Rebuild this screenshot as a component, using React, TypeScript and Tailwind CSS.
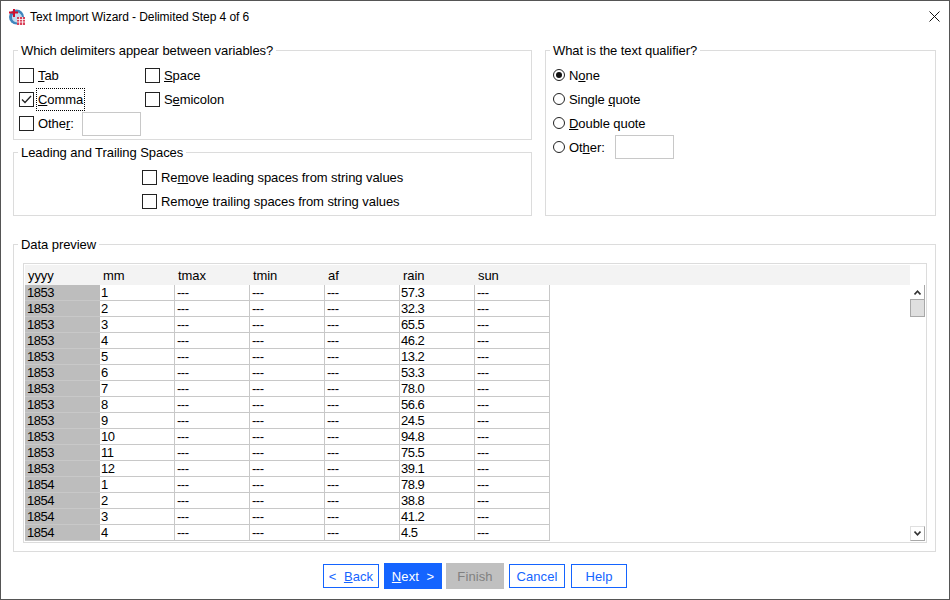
import { ReactNode } from 'react';

const columns = ['yyyy', 'mm', 'tmax', 'tmin', 'af', 'rain', 'sun'];

const rows: [string, string, string][] = [
  ['1853', '1', '57.3'],
  ['1853', '2', '32.3'],
  ['1853', '3', '65.5'],
  ['1853', '4', '46.2'],
  ['1853', '5', '13.2'],
  ['1853', '6', '53.3'],
  ['1853', '7', '78.0'],
  ['1853', '8', '56.6'],
  ['1853', '9', '24.5'],
  ['1853', '10', '94.8'],
  ['1853', '11', '75.5'],
  ['1853', '12', '39.1'],
  ['1854', '1', '78.9'],
  ['1854', '2', '38.8'],
  ['1854', '3', '41.2'],
  ['1854', '4', '4.5'],
];

function Group({ title, className, children }: { title: string; className: string; children?: ReactNode }) {
  return (
    <div className={`relative border border-[#dcdcdc] ${className}`}>
      <span className="absolute left-[4px] top-[-8px] h-[16px] bg-white px-[3px] leading-[16px]">{title}</span>
      {children}
    </div>
  );
}

function Check({ checked, children }: { checked?: boolean; children: ReactNode }) {
  return (
    <div className="flex h-[24px] items-center">
      <div className="flex h-[15px] w-[15px] shrink-0 items-center justify-center border border-[#222]">
        {checked && (
          <svg width="13" height="13" viewBox="0 0 13 13" fill="none" stroke="#222" strokeWidth="1.3">
            <path d="M2 6.5 L5 9.5 L11 3" />
          </svg>
        )}
      </div>
      <div className="ml-[4px] whitespace-nowrap pt-[1px]">{children}</div>
    </div>
  );
}

function Radio({ checked, children }: { checked?: boolean; children: ReactNode }) {
  return (
    <div className="flex h-[24px] items-center">
      <div className="flex h-[12px] w-[12px] shrink-0 items-center justify-center rounded-full border border-[#222]">
        {checked && <div className="h-[6px] w-[6px] rounded-full bg-[#111]" />}
      </div>
      <div className="ml-[4px] whitespace-nowrap pt-[1px]">{children}</div>
    </div>
  );
}

function Btn({ children, variant = 'outline' }: { children: ReactNode; variant?: 'outline' | 'primary' | 'disabled' }) {
  if (variant === 'primary') {
    return <div className="flex h-[26px] w-[58px] items-center justify-center whitespace-pre bg-[#1464ff] pt-[1px] tracking-[0.1px] text-white">{children}</div>;
  }
  if (variant === 'disabled') {
    return <div className="flex h-[26px] w-[58px] items-center justify-center whitespace-pre bg-[#c0c0c0] pt-[1px] tracking-[0.1px] text-[#808080]">{children}</div>;
  }
  return <div className="flex h-[24px] w-[56px] items-center justify-center whitespace-pre border border-[#1464ff] pt-[1px] tracking-[0.1px] text-[#1464ff]">{children}</div>;
}

export default function App() {
  return (
    <div className="flex h-[600px] w-[950px] flex-col border border-[#555] bg-white text-[13px] tracking-[-0.07px] text-black" style={{ fontFamily: '"Liberation Sans", Arial, sans-serif' }}>
      {/* Title bar */}
      <div className="flex h-[31px] shrink-0 items-center pl-[7px] pr-[9px]">
        <svg width="18" height="18" viewBox="0 0 18 18">
          <circle cx="8.5" cy="9" r="7.5" fill="#3f86bd" />
          <circle cx="9" cy="9.5" r="5" fill="#c4dcef" />
          <rect x="9" y="9" width="8" height="8" fill="#d9435a" />
          <path d="M9 11.5h8M9 14h8M11.5 9v8M14.5 9v8" stroke="#fff" strokeWidth="0.8" />
          <path d="M6 1v8M1 4.5h9" stroke="#d0102e" strokeWidth="2" />
        </svg>
        <span className="ml-[4px] text-[12px]">Text Import Wizard - Delimited Step 4 of 6</span>
        <svg className="ml-auto" width="11" height="11" viewBox="0 0 11 11" fill="none" stroke="#111" strokeWidth="1">
          <path d="M0.5 0.5 L10.5 10.5 M10.5 0.5 L0.5 10.5" />
        </svg>
      </div>

      <div className="flex flex-col px-[12px] pt-[18px]">
        {/* Delimiters + qualifier */}
        <div className="flex gap-[13px]">
          <div className="flex w-[519px] flex-col gap-[12px]">
            <Group title="Which delimiters appear between variables?" className="h-[90px]">
              <div className="flex pl-[5px] pt-[12px]">
                <div className="w-[126px]">
                  <Check><u>T</u>ab</Check>
                  <Check checked><span className="-mx-[1px] px-[1px] py-[3px] outline-1 outline-black outline-dotted"><u>C</u>omma</span></Check>
                  <div className="flex items-center">
                    <Check>Othe<u>r</u>:</Check>
                    <div className="ml-[8px] mt-[1px] h-[24px] w-[59px] border border-[#c8c8c8]" />
                  </div>
                </div>
                <div>
                  <Check><u>S</u>pace</Check>
                  <Check>S<u>e</u>micolon</Check>
                </div>
              </div>
            </Group>
            <Group title="Leading and Trailing Spaces" className="h-[64px]">
              <div className="pl-[128px] pt-[12px]">
                <Check>Re<u>m</u>ove leading spaces from string values</Check>
                <Check>Remo<u>v</u>e trailing spaces from string values</Check>
              </div>
            </Group>
          </div>
          <Group title="What is the text qualifier?" className="h-[166px] w-[391px]">
            <div className="pl-[7px] pt-[12px]">
              <Radio checked>N<u>o</u>ne</Radio>
              <Radio>Single <u>q</u>uote</Radio>
              <Radio><u>D</u>ouble quote</Radio>
              <div className="flex items-center">
                <Radio>Ot<u>h</u>er:</Radio>
                <div className="ml-[10px] h-[24px] w-[59px] border border-[#c8c8c8]" />
              </div>
            </div>
          </Group>
        </div>

        {/* Data preview */}
        <Group title="Data preview" className="mt-[28px] h-[308px] w-[923px] py-[18px] pl-[9px]">
          <div className="h-[280px] w-[904px] border border-[#dcdcdc] p-[1px]">
            <div className="flex h-[20px] w-[885px] items-center bg-[#f3f3f3] pt-[1px]">
              {columns.map((c) => (
                <div key={c} className="w-[75px] pl-[3px]">{c}</div>
              ))}
            </div>
            <div className="flex">
              <div className="w-[885px] shrink-0 tracking-[-0.5px]">
                {rows.map(([year, month, rain], i) => (
                  <div key={i} className="flex h-[16px] leading-[16px]">
                    <div className="w-[75px] border-b border-[#c8c8c8] bg-[#bdbdbd] pl-[2px]">{year}</div>
                    <div className="w-[75px] border-r border-b border-[#c8c8c8] pl-[1px]">{month}</div>
                    <div className="w-[75px] border-r border-b border-[#c8c8c8] pl-[2px]">---</div>
                    <div className="w-[75px] border-r border-b border-[#c8c8c8] pl-[2px]">---</div>
                    <div className="w-[75px] border-r border-b border-[#c8c8c8] pl-[2px]">---</div>
                    <div className="w-[75px] border-r border-b border-[#c8c8c8] pl-[1px]">{rain}</div>
                    <div className="w-[75px] border-r border-b border-[#c8c8c8] pl-[2px]">---</div>
                  </div>
                ))}
              </div>
              {/* Scrollbar */}
              <div className="flex w-[15px] shrink-0 flex-col">
                <div className="flex h-[14px] items-center justify-center border-r border-[#a8a8a8]">
                  <svg width="7" height="5" viewBox="0 0 7 5" fill="none" stroke="#333" strokeWidth="1.6">
                    <path d="M0.5 4.5 L3.5 1.2 L6.5 4.5" />
                  </svg>
                </div>
                <div className="h-[18px] border border-[#a8a8a8] bg-[#dfdfdf]" />
                <div className="flex-1" />
                <div className="flex h-[15px] items-center justify-center border border-t-[#e0e0e0] border-r-[#a8a8a8] border-b-[#a8a8a8] border-l-[#e0e0e0]">
                  <svg width="7" height="5" viewBox="0 0 7 5" fill="none" stroke="#333" strokeWidth="1.6">
                    <path d="M0.5 0.5 L3.5 3.8 L6.5 0.5" />
                  </svg>
                </div>
              </div>
            </div>
          </div>
        </Group>

        {/* Buttons */}
        <div className="ml-[310px] mt-[11px] flex items-center">
          <Btn>{'<  '}<u>B</u>ack</Btn>
          <div className="ml-[5px]"><Btn variant="primary"><u>N</u>ext{'  >'}</Btn></div>
          <div className="ml-[4px]"><Btn variant="disabled">Finish</Btn></div>
          <div className="ml-[5px]"><Btn>Cancel</Btn></div>
          <div className="ml-[6px]"><Btn>Help</Btn></div>
        </div>
      </div>
    </div>
  );
}
